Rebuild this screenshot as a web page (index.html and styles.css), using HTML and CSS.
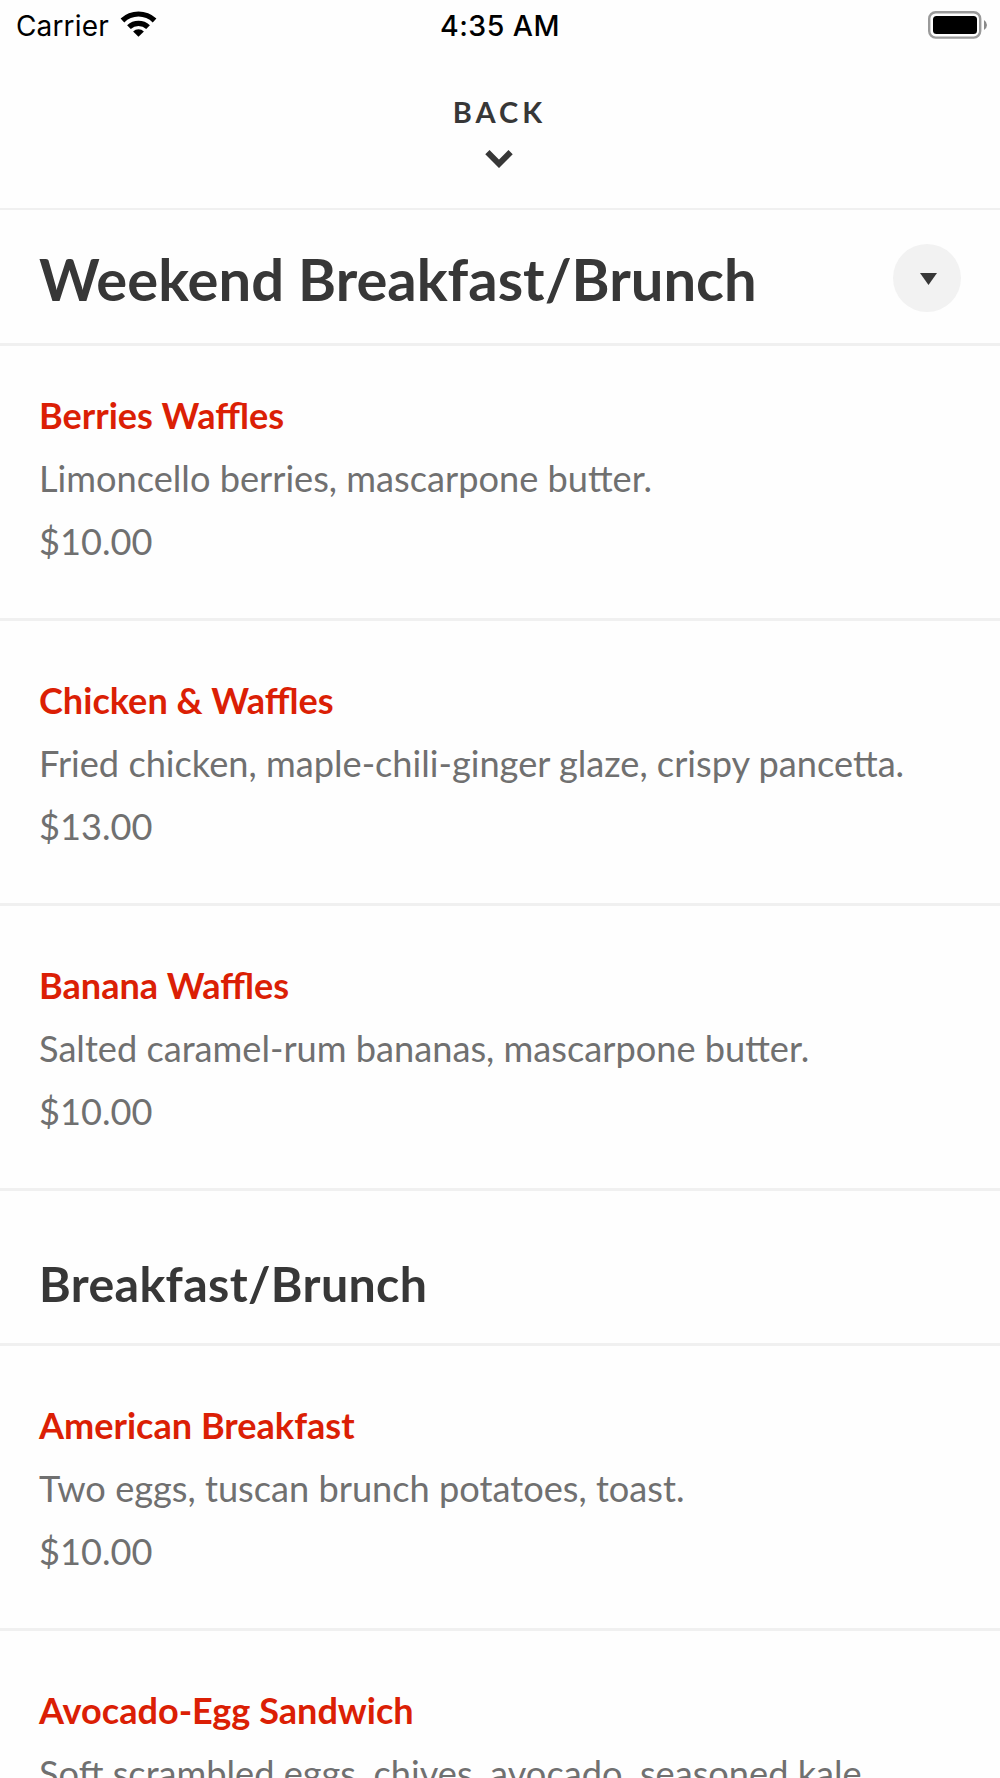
FILE: index.html
```html
<!DOCTYPE html>
<html lang="en">
<head>
    <meta charset="UTF-8">
    <meta name="viewport" content="width=device-width, initial-scale=1.0">
    <title>Weekend Breakfast/Brunch</title>
    <link rel="stylesheet" href="styles.css">
</head>
<body>
    <div class="status-bar">
        <div class="carrier">
            <span>Carrier</span>
            <svg class="wifi" width="38" height="28" viewBox="0 0 38 28">
                <path d="M0.6 8.6 A26 26 0 0 1 36.4 8.6 L32.7 12.4 A20 20 0 0 0 4.3 12.4 Z"/>
                <path d="M7.1 15.2 A17 17 0 0 1 29.9 15.2 L26.2 19 A11.3 11.3 0 0 0 10.8 19 Z"/>
                <path d="M13.1 21.4 A8 8 0 0 1 23.9 21.4 L18.5 26.8 Z"/>
            </svg>
        </div>
        <div class="time">4:35 AM</div>
        <svg class="battery" width="60" height="28" viewBox="0 0 60 28">
            <rect x="1.2" y="1.2" width="51" height="25.4" rx="6.5" fill="none" stroke="#9a9a9a" stroke-width="2.4"/>
            <rect x="5" y="5" width="44" height="18" rx="3.5"/>
            <path d="M56 9 Q59 11 59 14 Q59 17 56 19 Z" fill="#8a8a8a"/>
        </svg>
    </div>

    <a class="back">
        <span>BACK</span>
        <svg width="28" height="18" viewBox="0 0 28 18">
            <path d="M2.4 2.2 L14 13.8 L25.6 2.2" fill="none" stroke="#373737" stroke-width="6"/>
        </svg>
    </a>

    <header class="menu-header">
        <h1>Weekend Breakfast/Brunch</h1>
        <button class="dropdown">
            <svg width="18" height="12" viewBox="0 0 18 12"><path d="M1 0 H18 L9.5 12 Z" fill="#373737"/></svg>
        </button>
    </header>

    <section class="menu">
        <div class="item first">
            <h3>Berries Waffles</h3>
            <p>Limoncello berries, mascarpone butter.</p>
            <p>$10.00</p>
        </div>
        <div class="item">
            <h3>Chicken &amp; Waffles</h3>
            <p>Fried chicken, maple-chili-ginger glaze, crispy pancetta.</p>
            <p>$13.00</p>
        </div>
        <div class="item">
            <h3>Banana Waffles</h3>
            <p>Salted caramel-rum bananas, mascarpone butter.</p>
            <p>$10.00</p>
        </div>
    </section>

    <section class="menu">
        <h2>Breakfast/Brunch</h2>
        <div class="item">
            <h3>American Breakfast</h3>
            <p>Two eggs, tuscan brunch potatoes, toast.</p>
            <p>$10.00</p>
        </div>
        <div class="item last">
            <h3>Avocado-Egg Sandwich</h3>
            <p>Soft scrambled eggs, chives, avocado, seasoned kale</p>
        </div>
    </section>
</body>
</html>
```

FILE: styles.css
```css
:root {
    --dark: #373737;
    --gray: #707070;
    --red: #db1f05;
    --line: #f0f0f0;
}

* {
    box-sizing: border-box;
    margin: 0;
    padding: 0;
}

body {
    font-family: 'Lato', sans-serif;
    background: #fefefe;
    color: var(--dark);
    height: 1778px;
    overflow: hidden;
}

.status-bar {
    display: grid;
    grid-template-columns: 1fr auto 1fr;
    align-items: center;
    height: 50px;
    padding: 2px 12px 0 16px;
    font-family: 'Inter', sans-serif;
    font-size: 28px;
    color: #000;
}

.carrier {
    display: flex;
    align-items: center;
    gap: 11px;
    letter-spacing: 0.15px;
}

.wifi {
    margin-bottom: 5px;
}

.time {
    padding: 0 4px 2px 0;
    font-size: 28.5px;
    font-weight: 500;
    letter-spacing: 0.45px;
}

.battery {
    justify-self: end;
    margin-bottom: 3px;
}

.back {
    display: flex;
    flex-direction: column;
    align-items: center;
    height: 160px;
    padding: 44px 3px 0 0;
    border-bottom: 2px solid var(--line);
    font-size: 29px;
    font-weight: 700;
    line-height: 35px;
    letter-spacing: 4px;
}

.back span {
    margin-left: 2px;
}

.back svg {
    margin-top: 21px;
}

.menu-header {
    display: flex;
    align-items: center;
    justify-content: space-between;
    height: 136px;
    padding: 2px 39px 0 39px;
    border-bottom: 3px solid var(--line);
}

h1 {
    padding-top: 3px;
    font-size: 57.9px;
    font-weight: 700;
    line-height: 70px;
}

.dropdown {
    display: flex;
    align-items: center;
    justify-content: center;
    width: 68px;
    height: 68px;
    padding: 2px 0 0 1px;
    border: none;
    border-radius: 50%;
    background: #f2f2f2;
}

h2 {
    height: 155px;
    padding: 63px 39px 0;
    border-bottom: 3px solid var(--line);
    font-size: 48.3px;
    font-weight: 700;
    line-height: 58px;
    letter-spacing: 0.36px;
}

.item {
    height: 285px;
    padding: 48px 39px 0;
    border-bottom: 3px solid var(--line);
    font-size: 36.2px;
    line-height: 63px;
    white-space: nowrap;
}

.item.first {
    height: 275px;
    padding-top: 38px;
}

/* runs off the bottom of the screen */
.item.last {
    height: 147px;
    border-bottom: none;
    overflow: hidden;
}

.item h3 {
    color: var(--red);
    font-size: 36.1px;
    font-weight: 700;
}

.item p {
    color: var(--gray);
}
```
